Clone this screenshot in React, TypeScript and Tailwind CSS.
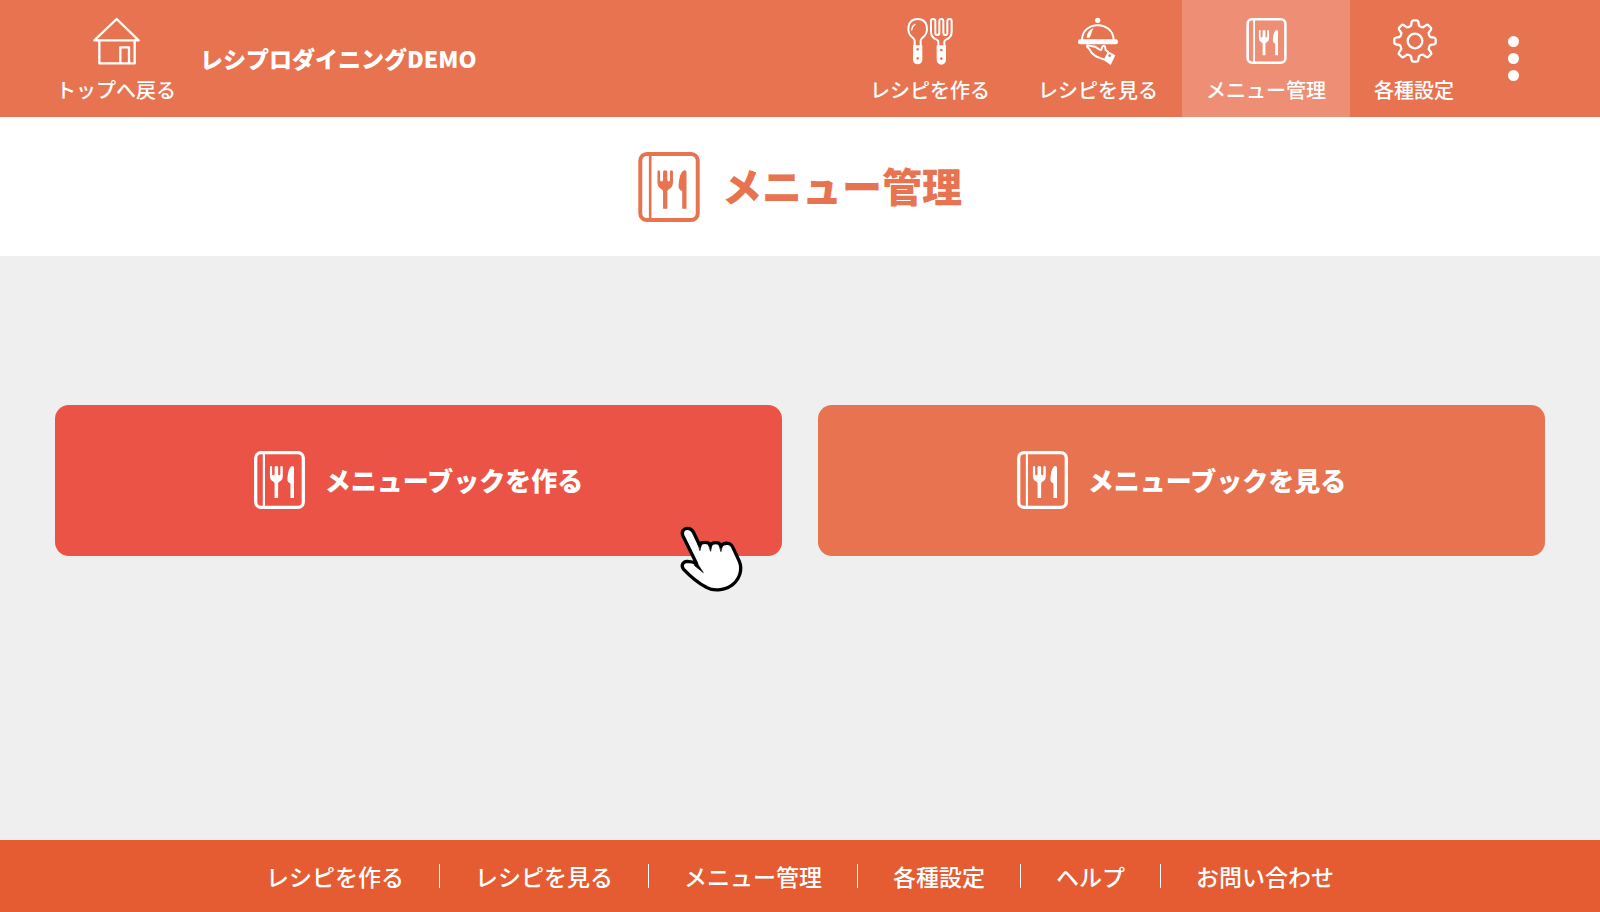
import type { ReactNode } from 'react'

const gearPath =
  Array.from({ length: 8 }, (_, i) => {
    const angle = (i * Math.PI) / 4
    const at = (x: number, y: number) =>
      `${(x * Math.cos(angle) - y * Math.sin(angle)).toFixed(1)} ${(x * Math.sin(angle) + y * Math.cos(angle)).toFixed(1)}`
    return `${i === 0 ? 'M' : 'L'}${at(-12, -46)} L${at(-10, -57)} Q${at(-9, -62)} ${at(-5, -62)} L${at(5, -62)} Q${at(9, -62)} ${at(10, -57)} L${at(12, -46)} Q${at(17, -41)} ${at(24, -41)}`
  }).join(' ') + ' Z'

function Glyph({ children }: { children: ReactNode }) {
  return (
    <svg viewBox="0 0 192 180" className="h-[60px] w-16" fill="none" stroke="currentColor" strokeLinecap="round" strokeLinejoin="round" aria-hidden="true">
      {children}
    </svg>
  )
}

function HouseIcon() {
  return (
    <Glyph>
      <g strokeWidth="7">
        <path d="M98 27 L164 91 H31 Z" />
        <path d="M46 92 V160 H152 V92" />
        <path d="M109 159 V112 H135 V159" />
      </g>
    </Glyph>
  )
}

function CutleryIcon() {
  return (
    <Glyph>
      <g transform="translate(-3 0)">
        <g strokeWidth="6">
          <path d="M53 106 V93 Q53 88 48 84 C26 68 30 27 62 27 C94 27 98 68 76 84 Q71 88 71 93 V106" />
          <path d="M44 60 Q45 48 54 43" strokeWidth="4" />
          <path d="M124 106 V96 Q124 91 119 89 Q102 82 102 65 V34 Q102 27 108 27 Q115 27 115 34 V68 Q115 75 121 75 Q127 75 127 68 V34 Q127 27 133 27 Q139 27 139 34 V68 Q139 75 145 75 Q151 75 151 68 V34 Q151 27 158 27 Q164 27 164 34 V65 Q164 82 147 89 Q142 91 142 96 V106" />
        </g>
        <g fill="currentColor" stroke="none">
          <path fillRule="evenodd" d="M48 106 H76 V149 A14 14 0 0 1 48 149 Z M62 114 a4 4 0 1 0 .1 0 Z M62 141 a4 4 0 1 0 .1 0 Z" />
          <path fillRule="evenodd" d="M119 106 H147 V150 A14 14 0 0 1 119 150 Z M133 116 a4 4 0 1 0 .1 0 Z M133 142 a4 4 0 1 0 .1 0 Z" />
        </g>
      </g>
    </Glyph>
  )
}

function ClocheIcon() {
  return (
    <Glyph>
      <g fill="currentColor" stroke="none">
        <circle cx="95" cy="31" r="8" />
        <rect x="36" y="88" width="120" height="15" rx="7" />
        <path d="M62 83 C63 69 71 58 83 55 C77 62 76 74 71 83 Z" />
        <path fillRule="evenodd" d="M126 124 L148 136 L134 165 L113 150 Z M131 133 a4 4 0 1 0 .1 0 Z" />
      </g>
      <path d="M48 89 C50 31 140 31 143 89" strokeWidth="6" />
      <path d="M116 149 C94 142 78 136 71 119 L63 109 Q62 104 71 107 L87 110 L101 119 Q106 122 107 116 L109 110 Q114 105 117 110 L119 120 L127 127" strokeWidth="6" />
    </Glyph>
  )
}

function GearIcon() {
  return (
    <Glyph>
      <g transform="translate(99 93)" strokeWidth="7">
        <path d={gearPath} />
        <circle r="22" />
      </g>
    </Glyph>
  )
}

function BookIcon({ className }: { className: string }) {
  return (
    <svg viewBox="0 0 186 212" className={className} fill="currentColor" aria-hidden="true">
      <rect x="6" y="6" width="174" height="200" rx="20" fill="none" stroke="currentColor" strokeWidth="12" />
      <path d="M32 8 h8 v196 h-8 Z" />
      <path d="M58 60 Q58 55 62 55 Q66 55 66 60 V85 Q66 89 70 89 Q75 89 75 85 V60 Q75 55 81 55 Q88 55 88 60 V85 Q88 89 92 89 Q96 89 96 85 V60 Q96 55 100 55 Q105 55 105 60 V92 Q105 104 98 109 Q88 114 88 119 V172 H75 V119 Q75 114 65 109 Q58 104 58 92 Z" />
      <path d="M146 172 H133 V119 Q121 113 122 103 C123 82 128 55 141 55 Q146 55 146 61 Z" />
    </svg>
  )
}

function PointerHand() {
  return (
    <svg viewBox="0 0 300 300" className="pointer-events-none absolute right-[22px] -bottom-[44px] size-[100px]" strokeLinejoin="round" strokeLinecap="round" aria-hidden="true">
      <path
        d="M110 191 L69 108 C63 95 71 85 83 85 C92 85 97 90 100 96 L119 136 C120 129 127 127 135 127 C144 127 149 130 151 136 C154 130 160 128 167 128 C176 128 181 132 183 138 C187 131 196 129 204 130 C214 131 217 138 220 145 L238 184 C248 208 239 236 220 252 C200 270 163 276 139 262 C113 248 89 227 71 208 C62 197 68 185 82 184 C94 184 103 187 110 191 Z"
        fill="#fff"
        stroke="#000"
        strokeWidth="10"
      />
      <path d="M104 180 L113 192 L130 218 L104 197 Z M114 130 L125 132 L120 151 Z M146 134 L156 134 L152 153 Z M178 135 L188 135 L183 154 Z" fill="#000" stroke="#000" strokeWidth="2" />
    </svg>
  )
}

const navItems = [
  { label: 'レシピを作る', icon: <CutleryIcon />, active: false },
  { label: 'レシピを見る', icon: <ClocheIcon />, active: false },
  {
    label: 'メニュー管理',
    icon: (
      <span className="flex h-[60px] items-center justify-center pt-[2px]">
        <BookIcon className="h-[46px] w-[41px]" />
      </span>
    ),
    active: true,
  },
  { label: '各種設定', icon: <GearIcon />, active: false },
]

const footerItems = ['レシピを作る', 'レシピを見る', 'メニュー管理', '各種設定', 'ヘルプ', 'お問い合わせ']

export default function App() {
  return (
    <div className="flex min-h-screen flex-col bg-[#efefef] font-['Noto_Sans_CJK_JP',sans-serif] font-medium text-white">
      <header className="flex h-[117px] items-stretch justify-between bg-[#e87351] pr-[52px] pl-14">
        <div className="flex items-center gap-6">
          <a href="#top" className="flex h-full flex-col items-center pt-[10px] text-xl leading-10 whitespace-nowrap">
            <HouseIcon />
            トップへ戻る
          </a>
          <span className="text-[23px] font-black whitespace-nowrap">レシプロダイニングDEMO</span>
        </div>
        <div className="flex items-stretch">
          <nav className="flex items-stretch" aria-label="メイン">
            {navItems.map((item) => (
              <a
                key={item.label}
                href="#nav"
                aria-current={item.active ? 'page' : undefined}
                className={`flex flex-col items-center px-6 pt-[10px] text-xl leading-10 whitespace-nowrap ${item.active ? 'bg-[#ee8e75]' : ''}`}
              >
                {item.icon}
                {item.label}
              </a>
            ))}
          </nav>
          <button type="button" aria-label="その他" className="flex w-[70px] flex-col items-center justify-center gap-[6px]">
            <span className="size-[11px] rounded-full bg-white" />
            <span className="size-[11px] rounded-full bg-white" />
            <span className="size-[11px] rounded-full bg-white" />
          </button>
        </div>
      </header>

      <div className="flex h-[139px] items-center justify-center gap-[22px] bg-white text-[#e87351]">
        <BookIcon className="h-[70px] w-[62px]" />
        <h1 className="pb-1 text-[40px] leading-none font-black">メニュー管理</h1>
      </div>

      <main className="grid flex-1 grid-cols-2 content-start gap-9 px-[55px] pt-[149px] pb-16">
        <button type="button" className="relative flex h-[151px] items-center justify-center gap-5 rounded-[14px] bg-[#ec5347] pb-[2px] text-[26px] font-black">
          <BookIcon className="h-[58px] w-[51px]" />
          メニューブックを作る
          <PointerHand />
        </button>
        <button type="button" className="flex h-[151px] items-center justify-center gap-5 rounded-[14px] bg-[#e87351] pb-[2px] text-[26px] font-black">
          <BookIcon className="h-[58px] w-[51px]" />
          メニューブックを見る
        </button>
      </main>

      <footer className="flex h-[72px] items-center justify-center bg-[#e55b32] text-[23px]">
        {footerItems.map((label, i) => (
          <div key={label} className="flex items-center">
            {i > 0 && <span className="h-6 w-px bg-white" />}
            <a href="#footer" className="px-[35px] whitespace-nowrap">
              {label}
            </a>
          </div>
        ))}
      </footer>
    </div>
  )
}
